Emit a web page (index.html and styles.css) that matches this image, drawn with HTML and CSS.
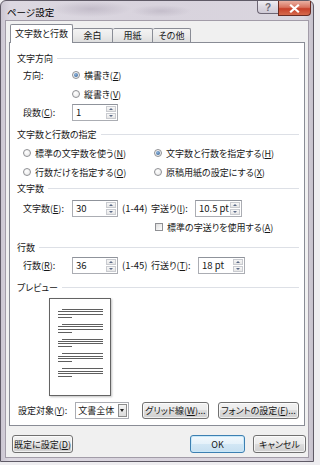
FILE: index.html
```html
<!DOCTYPE html>
<html lang="ja">
<head>
    <meta charset="UTF-8">
    <meta name="viewport" content="width=device-width, initial-scale=1.0">
    <title>ページ設定</title>
    <link rel="stylesheet" href="styles.css">
</head>
<body>

    <div class="window">
        <div class="titlebar">
            <span class="title">ページ設定</span>
            <div class="caption-btns">
                <span class="cap help">?</span>
                <span class="cap close">
                    <svg width="11" height="9" viewBox="0 0 11 9"><path d="M2 1.5 L9 7.5 M9 1.5 L2 7.5" stroke="#fff" stroke-width="2.2" stroke-linecap="square"/></svg>
                </span>
            </div>
        </div>

        <div class="client">
            <div class="tabs">
                <span class="tab active">文字数と行数</span>
                <span class="tab w39">余白</span>
                <span class="tab w39">用紙</span>
                <span class="tab w38">その他</span>
            </div>

            <div class="panel">
                <div class="group-title">文字方向</div>
                <div class="row mt1">
                    <span class="lbl">方向:</span>
                    <span class="radio on"></span>
                    <span>横書き(<u>Z</u>)</span>
                </div>
                <div class="row mt3 indent-radio">
                    <span class="radio"></span>
                    <span>縦書き(<u>V</u>)</span>
                </div>
                <div class="row mt2">
                    <span class="lbl">段数(<u>C</u>):</span>
                    <span class="spin w46"><span class="val">1</span><span class="arrows"><i class="up"></i><i class="down"></i></span></span>
                </div>

                <div class="group-title mt6">文字数と行数の指定</div>
                <div class="row mt3">
                    <span class="col"><span class="radio"></span><span>標準の文字数を使う(<u>N</u>)</span></span>
                    <span class="radio on"></span><span>文字数と行数を指定する(<u>H</u>)</span>
                </div>
                <div class="row mt3">
                    <span class="col"><span class="radio"></span><span>行数だけを指定する(<u>O</u>)</span></span>
                    <span class="radio"></span><span>原稿用紙の設定にする(<u>X</u>)</span>
                </div>

                <div class="group-title">文字数</div>
                <div class="row tall mt3">
                    <span class="lbl">文字数(<u>E</u>):</span>
                    <span class="spin w46"><span class="val">30</span><span class="arrows"><i class="up"></i><i class="down"></i></span></span>
                    <span class="range">(1-44)</span>
                    <span class="lbl2 w44">字送り(<u>I</u>):</span>
                    <span class="spin w47"><span class="val">10.5 pt</span><span class="arrows"><i class="up"></i><i class="down"></i></span></span>
                </div>
                <div class="row mt2 indent-check">
                    <span class="check"></span>
                    <span>標準の字送りを使用する(<u>A</u>)</span>
                </div>

                <div class="group-title mt4">行数</div>
                <div class="row tall mt1">
                    <span class="lbl">行数(<u>R</u>):</span>
                    <span class="spin w46"><span class="val">36</span><span class="arrows"><i class="up"></i><i class="down"></i></span></span>
                    <span class="range">(1-45)</span>
                    <span class="lbl2 w47">行送り(<u>T</u>):</span>
                    <span class="spin w47"><span class="val">18 pt</span><span class="arrows"><i class="up"></i><i class="down"></i></span></span>
                </div>

                <div class="group-title mt5">プレビュー</div>
                <div class="preview">
                    <div class="para"><i class="ln first"></i><i class="ln"></i><i class="ln"></i><i class="ln short"></i></div>
                    <div class="para"><i class="ln first"></i><i class="ln"></i><i class="ln"></i><i class="ln short"></i></div>
                    <div class="para"><i class="ln first"></i><i class="ln"></i><i class="ln"></i><i class="ln short"></i></div>
                    <div class="para"><i class="ln first"></i><i class="ln"></i><i class="ln"></i><i class="ln short"></i></div>
                    <div class="para"><i class="ln first"></i><i class="ln"></i><i class="ln"></i><i class="ln short"></i></div>
                </div>

                <div class="row bottom-row">
                    <span class="lbl3">設定対象(<u>Y</u>):</span>
                    <span class="select"><span class="val">文書全体</span><span class="drop"><i></i></span></span>
                    <span class="btn w68">グリッド線(<u>W</u>)...</span>
                    <span class="btn w82">フォントの設定(<u>F</u>)...</span>
                </div>
            </div>

            <div class="footer">
                <span class="btn w61">既定に設定(<u>D</u>)</span>
                <span class="btn ok">OK</span>
                <span class="btn cancel">キャンセル</span>
            </div>
        </div>
    </div>

</body>
</html>
```

FILE: styles.css
```css
* {
    margin: 0;
    padding: 0;
    box-sizing: border-box;
}
body {
    font-family: "Noto Sans CJK JP", "Noto Sans", sans-serif;
    font-size: 9px;
    font-feature-settings: "palt";
    color: #161616;
    background-color: #eeedf0;
}
u {
    text-decoration: underline;
    text-underline-offset: 1px;
}
.window {
    width: 314px;
    height: 462px;
    border: 1px solid #5f5a66;
    border-radius: 6px 6px 0 0;
    padding: 0 4px 3px 4px;
    display: flex;
    flex-direction: column;
    background:
        radial-gradient(ellipse 40px 8px at 90px 8px, rgba(150, 140, 160, 0.35), transparent),
        radial-gradient(ellipse 30px 6px at 160px 10px, rgba(150, 140, 160, 0.3), transparent),
        linear-gradient(to right, #cbc6d1, #dcd8e1 3%, #d8d3dd 50%, #dad6df 97%, #c6c1cc);
}
.titlebar {
    height: 19px;
    display: flex;
    align-items: flex-start;
}
.title {
    margin: 5px 0 0 2px;
    line-height: 12px;
    font-size: 9.5px;
    color: #000;
}
.caption-btns {
    margin-left: auto;
    margin-right: -2px;
    display: flex;
}
.cap {
    height: 14px;
    display: flex;
    align-items: center;
    justify-content: center;
    border: 1px solid #6d6674;
    border-top: none;
}
.help {
    width: 21px;
    height: 13px;
    border-radius: 0 0 0 4px;
    border-right: none;
    background: linear-gradient(#f0eef3, #dcd8e1 50%, #cfcad6);
    color: #6a6872;
    font-family: "Liberation Sans", sans-serif;
    font-size: 10px;
    font-weight: bold;
}
.close {
    width: 33px;
    height: 15px;
    border-radius: 0 0 4px 0;
    border-color: #6b2b22;
    background: linear-gradient(#eab0a2, #d8735f 45%, #c7402a 55%, #d66a4c);
}
.client {
    flex: 1;
    background-color: #f0f0f0;
    border: 1px solid #a29ca8;
    padding: 4px 3px 4px 3px;
    display: flex;
    flex-direction: column;
}
.tabs {
    height: 17px;
    display: flex;
    align-items: flex-end;
    margin-left: 1px;
}
.tab {
    height: 14px;
    line-height: 13px;
    text-align: center;
    border: 1px solid #898c95;
    border-bottom: none;
    border-left: none;
    border-radius: 2px 2px 0 0;
    background: linear-gradient(#f3f3f3, #ebebeb 50%, #dedede);
}
.tab.active {
    width: 63px;
    height: 19px;
    line-height: 17px;
    border-left: 1px solid #898c95;
    margin-bottom: -1px;
    background: #fff;
    position: relative;
    z-index: 1;
}
.w39 { width: 40px; }
.w38 { width: 38px; }
.panel {
    height: 384px;
    border: 1px solid #898c95;
    background-color: #fff;
    padding: 7px 5px 0 7px;
}
.group-title {
    height: 16px;
    display: flex;
    align-items: center;
    gap: 4px;
    white-space: nowrap;
}
.group-title::after {
    content: "";
    flex: 1;
    border-top: 1px solid #dde0e6;
}
.row {
    height: 16px;
    display: flex;
    align-items: center;
    padding-left: 6px;
    white-space: nowrap;
}
.row.tall {
    height: 18px;
}
.mt1 { margin-top: 1px; }
.mt2 { margin-top: 2px; }
.mt3 { margin-top: 3px; }
.mt4 { margin-top: 4px; }
.mt5 { margin-top: 5px; }
.mt6 { margin-top: 6px; }
.lbl {
    width: 49px;
}
.indent-radio {
    padding-left: 55px;
}
.indent-check {
    padding-left: 138px;
}
.col {
    width: 131px;
    display: flex;
    align-items: center;
}
.radio {
    width: 8px;
    height: 8px;
    border-radius: 50%;
    border: 1px solid #8f9094;
    background: radial-gradient(circle at 40% 35%, #fff, #e4e4e4);
    margin-right: 4px;
    flex: none;
    display: flex;
    align-items: center;
    justify-content: center;
}
.radio.on::after {
    content: "";
    width: 4px;
    height: 4px;
    border-radius: 50%;
    background: radial-gradient(circle at 40% 35%, #8fb4dc, #2b5a8f);
}
.check {
    width: 8px;
    height: 8px;
    border: 1px solid #8f9094;
    background: linear-gradient(135deg, #dcdcdc, #fff);
    margin-right: 4px;
}
.spin {
    height: 17px;
    display: flex;
    border: 1px solid #abadb3;
    border-top-color: #8f939b;
    background: #fff;
}
.w46 { width: 46px; }
.w47 { width: 47px; }
.w44 { width: 44px; }
.spin .val,
.select .val {
    flex: 1;
    padding-left: 3px;
    line-height: 15px;
    font-size: 9.5px;
}
.select .val {
    font-size: 9px;
    padding-left: 2px;
}
.arrows {
    width: 11px;
    display: flex;
    flex-direction: column;
    gap: 1px;
    padding: 1px 1px 1px 0;
}
.arrows i {
    flex: 1;
    border: 1px solid #c9cbd0;
    background: linear-gradient(#f7f7f7, #e6e6e6);
    display: flex;
    align-items: center;
    justify-content: center;
}
.arrows i::after {
    content: "";
    border-left: 2px solid transparent;
    border-right: 2px solid transparent;
}
.arrows .up::after {
    border-bottom: 2px solid #5a6a88;
}
.arrows .down::after {
    border-top: 2px solid #5a6a88;
}
.range {
    width: 33px;
    padding-left: 4px;
    font-size: 9.5px;
}
.preview {
    width: 62px;
    height: 98px;
    margin: 3px 0 0 32px;
    border: 1px solid #646464;
    background: #fff;
    box-shadow: 1px 1px 2px rgba(0, 0, 0, 0.25);
    padding: 10px 7px 0 8px;
}
.para {
    margin-bottom: 6px;
}
.ln {
    display: block;
    height: 1px;
    margin-bottom: 1.4px;
    background-color: #5f5f5f;
}
.ln.first {
    margin-left: 4px;
}
.ln.short {
    width: 14px;
    margin-top: 2px;
}
.bottom-row {
    height: 17px;
    margin-top: 6px;
    padding-left: 1px;
}
.lbl3 {
    width: 58px;
}
.select {
    width: 54px;
    height: 17px;
    display: flex;
    border: 1px solid #abadb3;
    background: #fff;
    margin-right: 13px;
}
.drop {
    width: 9px;
    margin: 1px 1px 1px 0;
    border: 1px solid #8c8c8c;
    background: linear-gradient(#f4f4f4, #dcdcdc);
    display: flex;
    align-items: center;
    justify-content: center;
}
.drop i {
    border-left: 2px solid transparent;
    border-right: 2px solid transparent;
    border-top: 3px solid #222;
}
.btn {
    height: 17px;
    display: flex;
    align-items: center;
    justify-content: center;
    border: 1px solid #707070;
    border-radius: 3px;
    background: linear-gradient(#f2f2f2, #ebebeb 50%, #dddddd 50%, #cfcfcf);
    box-shadow: inset 0 0 0 1px rgba(255, 255, 255, 0.7);
    white-space: nowrap;
}
.w68 {
    width: 68px;
    margin-right: 9px;
}
.w82 { width: 82px; }
.w61 { width: 61px; }
.footer {
    height: 18px;
    margin-top: 9px;
    margin-left: 3px;
    margin-right: -1px;
    display: flex;
}
.footer .btn {
    height: 18px;
}
.ok {
    width: 55px;
    margin-left: auto;
    border-color: #3c7fb1;
    background: linear-gradient(#f2f8fc, #e4f1fa 50%, #d2e7f5 50%, #c6dff0);
    box-shadow: inset 0 0 0 1px #c8e8f9;
}
.cancel {
    width: 53px;
    margin-left: 8px;
}
```
